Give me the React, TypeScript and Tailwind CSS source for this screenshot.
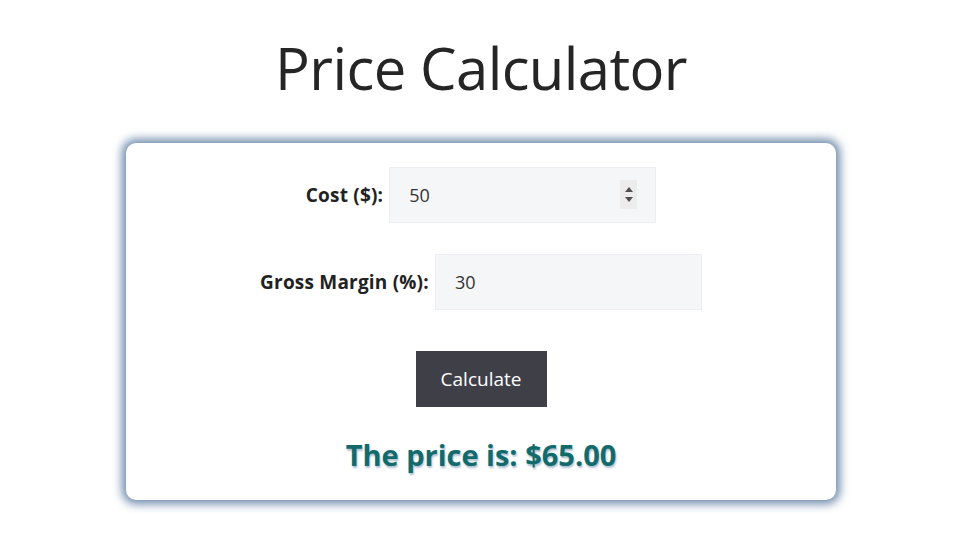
import React, { useState } from 'react';

const font = { fontFamily: '"Open Sans", "Noto Sans", "Liberation Sans", sans-serif' };

const Spinner: React.FC = () => (
    <div className="absolute right-[19px] top-[13px] w-[17px] h-[29px] bg-[#ececec] flex flex-col items-center justify-center gap-[5px]">
        <svg width="8" height="5" viewBox="0 0 8 5"><path d="M4 0 L8 5 L0 5 Z" fill="#505050" /></svg>
        <svg width="8" height="5" viewBox="0 0 8 5"><path d="M0 0 L8 0 L4 5 Z" fill="#505050" /></svg>
    </div>
);

const App: React.FC = () => {
    const [cost, setCost] = useState('50');
    const [margin, setMargin] = useState('30');
    const [price, setPrice] = useState('65.00');

    const calculate = () => {
        const c = parseFloat(cost) || 0;
        const m = parseFloat(margin) || 0;
        setPrice((c * (1 + m / 100)).toFixed(2));
    };

    return (
        <div className="w-[962px] h-[551px] bg-white flex flex-col items-center text-[#222]" style={font}>
            <h1 className="mt-[28px] text-[58px] leading-[80px] font-normal text-[#252525] tracking-[-0.6px]">Price Calculator</h1>
            <div className="mt-[35px] w-[710px] h-[357px] bg-white rounded-[10px] shadow-[0_0_10px_4px_rgba(85,118,158,0.85)] flex flex-col items-center pt-6">
                <div className="flex items-center gap-[6px]">
                    <label className="text-[19px] font-bold text-[#222] tracking-[0.2px]">Cost ($):</label>
                    <div className="relative">
                        <input
                            value={cost}
                            onChange={e => setCost(e.target.value)}
                            className="w-[267px] h-[56px] bg-[#f5f6f8] border border-[#eceef1] pl-[19px] text-[18px] text-[#333] outline-none"
                        />
                        <Spinner />
                    </div>
                </div>
                <div className="flex items-center gap-[6px] mt-[31px]">
                    <label className="text-[19px] font-bold text-[#222] tracking-[0.2px]">Gross Margin (%):</label>
                    <input
                        value={margin}
                        onChange={e => setMargin(e.target.value)}
                        className="w-[267px] h-[56px] bg-[#f5f6f8] border border-[#eceef1] pl-[19px] text-[18px] text-[#333] outline-none"
                    />
                </div>
                <button
                    onClick={calculate}
                    className="mt-[41px] w-[131px] h-[56px] bg-[#3f3f48] text-white text-[19px]"
                >
                    Calculate
                </button>
                <p className="mt-[26px] text-[29px] font-bold text-[#136a6a] [text-shadow:1px_2px_2px_rgba(120,150,180,0.6)]">
                    The price is: ${price}
                </p>
            </div>
        </div>
    );
};

export default App;
